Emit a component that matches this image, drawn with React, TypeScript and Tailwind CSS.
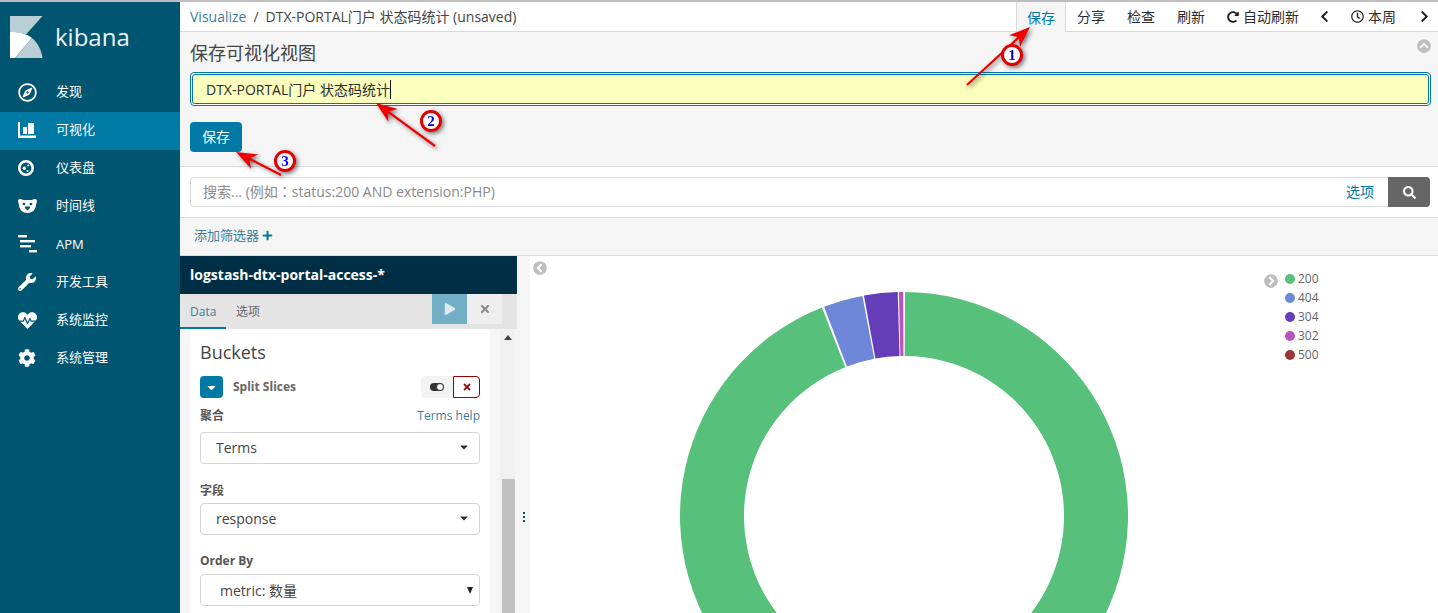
import { FaRegCompass, FaWrench, FaHeartbeat, FaCog, FaSearch, FaPlus, FaPlay, FaTimes, FaChevronLeft, FaChevronRight, FaChevronCircleUp, FaChevronCircleLeft, FaChevronCircleRight, FaRedoAlt, FaRegClock, FaCaretDown } from 'react-icons/fa'

const FONT = "font-['Open_Sans','Noto_Sans_CJK_SC',sans-serif]"

function BarsIcon() {
  return (
    <svg width="18" height="16" viewBox="0 0 18 16" fill="#fff">
      <path d="M0 0h2v13.500h16V16H0z" />
      <path d="M5 5h4v7H5zM10 1h6v11h-6z" />
    </svg>
  )
}

function DashIcon() {
  return (
    <svg width="16" height="16" viewBox="0 0 16 16">
      <circle cx="8" cy="8" r="6.700" fill="none" stroke="#fff" strokeWidth="2.600" />
      <circle cx="6.300" cy="8.300" r="1.700" fill="#fff" />
      <circle cx="10.300" cy="5.500" r="1.100" fill="#fff" />
      <circle cx="9.500" cy="11" r="1.100" fill="#fff" />
    </svg>
  )
}

function BearIcon() {
  return (
    <svg width="19" height="14" viewBox="0 0 19 14" fill="#fff">
      <path d="M0 2C0 .6 1 0 2.500 0 3.600 0 4.200.6 5 1h9c.8-.4 1.400-1 2.500-1C18 0 19 .6 19 2c0 1.200-.6 1.800-.8 3C18 10 15 14 9.500 14S1 10 .8 5C.6 3.800 0 3.200 0 2z" />
      <circle cx="6" cy="5" r="1.300" fill="#005571" />
      <circle cx="13" cy="5" r="1.300" fill="#005571" />
      <path d="M7 7.500h5v1.500l-2.500 2.500L7 9z" fill="#005571" />
    </svg>
  )
}

function ApmIcon() {
  return (
    <svg width="19" height="18" viewBox="0 0 19 18" fill="#fff">
      <rect x="0" y="0" width="9" height="2.400" />
      <rect x="2" y="5" width="15" height="2.400" />
      <rect x="2" y="10" width="11" height="2.400" />
      <rect x="11" y="15" width="8" height="2.400" />
    </svg>
  )
}

const NAV = [
  { label: '发现', icon: <FaRegCompass size={19} /> },
  { label: '可视化', icon: <BarsIcon />, active: true },
  { label: '仪表盘', icon: <DashIcon /> },
  { label: '时间线', icon: <BearIcon /> },
  { label: 'APM', icon: <ApmIcon /> },
  { label: '开发工具', icon: <FaWrench size={18} /> },
  { label: '系统监控', icon: <FaHeartbeat size={19} /> },
  { label: '系统管理', icon: <FaCog size={18} /> },
]

const LEGEND = [
  ['200', 'bg-[#57c17b]'],
  ['404', 'bg-[#6f87d8]'],
  ['304', 'bg-[#663db8]'],
  ['302', 'bg-[#bc52bc]'],
  ['500', 'bg-[#9e3533]'],
]

// donut slices, degrees clockwise from 12 o'clock
const SLICES = [
  { from: 0.25, to: 338.5, color: '#57c17b' },
  { from: 339.1, to: 349.3, color: '#6f87d8' },
  { from: 349.7, to: 358.4, color: '#663db8' },
  { from: 358.7, to: 359.8, color: '#bc52bc' },
]

function arcPath(from: number, to: number, R: number, r: number, c: number) {
  const pt = (rad: number, deg: number) => {
    const a = (deg * Math.PI) / 180
    return `${(c + rad * Math.sin(a)).toFixed(2)} ${(c - rad * Math.cos(a)).toFixed(2)}`
  }
  const large = to - from > 180 ? 1 : 0
  return `M${pt(R, from)} A${R} ${R} 0 ${large} 1 ${pt(R, to)} L${pt(r, to)} A${r} ${r} 0 ${large} 0 ${pt(r, from)} Z`
}

function Select({ value, pad = 'pl-[15px]', native }: { value: string; pad?: string; native?: boolean }) {
  return (
    <div className={`h-[32px] rounded-[4px] border border-[#d4d4d4] bg-white flex items-center justify-between ${pad} ${native ? 'pr-[6px]' : 'pr-[9px] pb-[2px]'} text-[14px] text-[#444]`}>
      <span>{value}</span>
      {native
        ? <span className="w-0 h-0 border-x-[3.500px] border-x-transparent border-t-[7px] border-t-[#222]" />
        : <FaCaretDown size={12} className="text-[#333]" />}
    </div>
  )
}

function Badge({ x, y, n }: { x: number; y: number; n: string }) {
  return (
    <g>
      <circle cx={x} cy={y} r="9.500" fill="#fff" stroke="#e00000" strokeWidth="3" />
      <text x={x} y={y + 5} textAnchor="middle" fontSize="15" fontWeight="700" fill="#0000ee" fontFamily="'Liberation Serif', serif">{n}</text>
    </g>
  )
}

function Arrow({ x1, y1, x2, y2 }: { x1: number; y1: number; x2: number; y2: number }) {
  const ang = Math.atan2(y2 - y1, x2 - x1)
  const d = (b: number, s: number) => `${x2 - b * Math.cos(ang) - s * Math.sin(ang)},${y2 - b * Math.sin(ang) + s * Math.cos(ang)}`
  return (
    <g>
      <line x1={x1} y1={y1} x2={x2 - 10 * Math.cos(ang)} y2={y2 - 10 * Math.sin(ang)} stroke="#f00000" strokeWidth="2.200" />
      <polygon points={`${x2},${y2} ${d(21, 8)} ${d(15, 0)} ${d(21, -8)}`} fill="#f00000" />
    </g>
  )
}

export default function App() {
  return (
    <div className={`relative h-[613px] w-[1438px] overflow-hidden bg-white flex flex-col ${FONT}`}>
      <div className="h-[2px] bg-[#bdbdbd] shrink-0" />
      <div className="flex flex-1 min-h-0">
        {/* left nav */}
        <aside className="w-[180px] shrink-0 bg-[#005571] text-white">
          <div className="h-[72px] flex items-start pl-[10px] pt-[14px]">
            <svg width="33" height="43" viewBox="0 0 33 43" className="shrink-0">
              <path d="M0 0h32.500L16 18.500C11 16.500 5 15.700 0 15.700z" fill="#b9ced6" />
              <path d="M0 15.700c8.500 0 16.500 2 22 6.300L5 42H0z" fill="#ffffff" />
              <path d="M22 22c5.500 4.500 9.500 12 10.500 20H5z" fill="#b9ced6" />
            </svg>
            <span className="ml-[12px] mt-[4px] text-[24px] leading-[34px] text-[#eef4f6]">kibana</span>
          </div>
          {NAV.map(item => (
            <div key={item.label} className={`h-[38px] flex items-center pb-[2px] ${item.active ? 'bg-[#0079a5]' : ''}`}>
              <div className="w-[56px] pl-[18px] flex items-center">{item.icon}</div>
              <span className={`text-[13px] ${item.label === 'APM' ? 'mt-[2px]' : ''}`}>{item.label}</span>
            </div>
          ))}
        </aside>

        <main className="flex-1 min-w-0 flex flex-col">
          {/* top bar */}
          <div className="h-[30px] shrink-0 flex items-stretch justify-between border-b border-[#d9d9d9] text-[14px] text-[#2d2d2d]">
            <div className="pl-[10px] flex items-center gap-[7px] text-[#444]">
              <span className="text-[#3c7f9b]">Visualize</span>
              <span>/</span>
              <span>DTX-PORTAL门户 状态码统计 (unsaved)</span>
            </div>
            <div className="flex items-stretch">
              <div className="w-[50px] -mb-px bg-[#f5f5f5] border-x border-[#d9d9d9] flex items-center justify-center text-[#0079a5]">保存</div>
              <div className="px-[11px] flex items-center">分享</div>
              <div className="px-[11px] flex items-center">检查</div>
              <div className="px-[11px] flex items-center">刷新</div>
              <div className="px-[11px] flex items-center gap-[4px]"><FaRedoAlt size={12} className="text-[#222]" />自动刷新</div>
              <div className="pl-[8px] pr-[12px] flex items-center"><FaChevronLeft size={13} className="text-[#222]" /></div>
              <div className="pl-[8px] pr-[11px] flex items-center gap-[4px]"><FaRegClock size={13} className="text-[#222]" />本周</div>
              <div className="pl-[11px] pr-[7px] flex items-center"><FaChevronRight size={13} className="text-[#222]" /></div>
            </div>
          </div>

          {/* save panel */}
          <div className="h-[135px] shrink-0 bg-[#f5f5f5] border-b border-[#d9d9d9] pl-[10px] pr-[7px] relative">
            <h2 className="pt-[9px] text-[18px] leading-[25px] text-[#444]">保存可视化视图</h2>
            <FaChevronCircleUp size={14} className="absolute right-[7px] top-[7px] text-[#bdbdbd]" />
            <div className="mt-[6px] h-[34px] rounded-[4px] border border-[#0079a5] bg-white p-px">
              <div className="h-full rounded-[3px] border border-[#0079a5] bg-[#faffbd] flex items-center pl-[13px] text-[14px] text-[#2d2d2d]">
                DTX-PORTAL门户 状态码统计<span className="w-px h-[19px] bg-[#111]" />
              </div>
            </div>
            <button className="mt-[16px] block w-[52px] h-[30px] pb-[2px] rounded-[4px] bg-[#0079a5] text-white text-[14px]">保存</button>
          </div>

          {/* search */}
          <div className="h-[51px] shrink-0 border-b border-[#d9d9d9] pl-[10px] pr-[8px] pt-[10px]">
            <div className="flex h-[30px]">
              <div className="flex-1 rounded-l-[4px] border border-r-0 border-[#d9d9d9] flex items-center justify-between pl-[12px] pr-[14px] pb-[2px] text-[14px] text-[#8a8a8a]">
                <span>搜索... (例如<span className="font-['Noto_Sans_CJK_TC',sans-serif]">：</span>status:200 AND extension:PHP)</span>
                <span className="text-[#0079a5]">选项</span>
              </div>
              <div className="w-[42px] rounded-r-[4px] bg-[#666] flex items-center justify-center">
                <FaSearch size={13} className="text-white" />
              </div>
            </div>
          </div>

          {/* filter bar */}
          <div className="h-[38px] shrink-0 bg-[#f5f5f5] border-b border-[#d9d9d9] pl-[14px] pb-[2px] flex items-center gap-[3px] text-[13px] text-[#3c7f9b]">
            添加筛选器<FaPlus size={11} className="text-[#0079a5]" />
          </div>

          <div className="flex-1 min-h-0 flex">
            {/* editor sidebar */}
            <div className="w-[337px] shrink-0 bg-[#f5f5f5] flex flex-col">
              <div className="h-[38px] shrink-0 bg-[#002f45] flex items-center pl-[10px] pb-[2px] text-[14px] font-bold text-white">logstash-dtx-portal-access-*</div>
              <div className="h-[35px] shrink-0 bg-[#e4e4e4] flex items-start text-[12px]">
                <div className="w-[46px] h-[35px] border-b-2 border-[#0079a5] pl-[10px] pt-[9px] text-[#3c7f9b]">Data</div>
                <div className="pl-[10px] pt-[9px] text-[#666]">选项</div>
                <div className="ml-auto mr-[15px] flex h-[30px]">
                  <div className="w-[35px] bg-[#72afc7] flex items-center justify-center"><FaPlay size={12} className="text-[#dcebf1]" /></div>
                  <div className="w-[35px] bg-[#eeeeee] flex items-center justify-center"><FaTimes size={12} className="text-[#8e8e8e]" /></div>
                </div>
              </div>
              <div className="flex-1 min-h-0 flex pl-[10px]">
                <div className="w-[300px] shrink-0 bg-white rounded-t-[4px] px-[10px] text-[#555]">
                  <h3 className="pt-[11px] text-[18px] leading-[25px] text-[#444]">Buckets</h3>
                  <div className="mt-[11px] flex items-center">
                    <div className="w-[23px] h-[22px] rounded-[4px] bg-[#0079a5] flex items-center justify-center"><FaCaretDown size={13} className="text-white" /></div>
                    <span className="ml-[10px] text-[12px] font-bold text-[#666]">Split Slices</span>
                    <div className="ml-auto flex h-[22px]">
                      <div className="w-[32px] rounded-l-[4px] bg-[#f3f3f3] flex items-center justify-center">
                        <div className="w-[14px] h-[8px] rounded-full bg-[#333] flex justify-end"><div className="w-[8px] h-[8px] rounded-full border border-[#333] bg-white" /></div>
                      </div>
                      <div className="w-[27px] rounded-r-[4px] border border-[#990000] bg-white flex items-center justify-center"><FaTimes size={10} className="text-[#990000]" /></div>
                    </div>
                  </div>
                  <div className="mt-[9px] flex items-center justify-between text-[12px] leading-[18px]">
                    <span className="font-bold text-[#555]">聚合</span>
                    <span className="text-[#3c7f9b]">Terms help</span>
                  </div>
                  <div className="mt-[7px]"><Select value="Terms" /></div>
                  <div className="mt-[18px] text-[12px] leading-[18px] font-bold text-[#555]">字段</div>
                  <div className="mt-[3px]"><Select value="response" /></div>
                  <div className="mt-[17px] text-[12px] leading-[18px] font-bold text-[#555]">Order By</div>
                  <div className="mt-[4px]"><Select value="metric: 数量" pad="pl-[19px]" native /></div>
                </div>
                <div className="ml-[10px] w-[15px] bg-[#f0f0f0] flex flex-col items-center relative">
                  <div className="mt-[6px] w-0 h-0 border-x-[4px] border-x-transparent border-b-[5px] border-b-[#444]" />
                  <div className="absolute left-[2px] right-0 top-[150px] bottom-0 bg-[#c0c0c0]" />
                </div>
              </div>
            </div>

            {/* resize handle */}
            <div className="w-[13px] shrink-0 bg-[#f5f5f5] flex flex-col items-center gap-[2px] pt-[256px]">
              <span className="w-[2px] h-[2px] bg-[#005571]" />
              <span className="w-[2px] h-[2px] bg-[#005571]" />
              <span className="w-[2px] h-[2px] bg-[#005571]" />
            </div>

            {/* chart */}
            <div className="flex-1 min-w-0 flex">
              <div className="w-[748px] shrink-0 relative flex justify-center pt-[36px]">
                <FaChevronCircleLeft size={14} className="absolute left-[3px] top-[5px] text-[#bdbdbd]" />
                <svg width="448" height="448" viewBox="0 0 448 448" className="shrink-0">
                  {SLICES.map(s => (
                    <path key={s.color} d={arcPath(s.from, s.to, 224, 160, 224)} fill={s.color} />
                  ))}
                </svg>
              </div>
              <div className="flex-1 flex items-start pt-[13px] pl-[7px]">
                <div className="flex flex-col">
                  {LEGEND.map(([label, color]) => (
                    <div key={label} className="h-[19px] flex items-center gap-[3px] text-[12px] text-[#666]">
                      <span className={`w-[10px] h-[10px] rounded-full ${color}`} />
                      {label}
                    </div>
                  ))}
                </div>
              </div>
            </div>
          </div>
        </main>
      </div>

      {/* legend toggle, lies beside the legend */}
      <FaChevronCircleRight size={14} className="absolute left-[1264px] top-[274px] text-[#bdbdbd]" />

      {/* red annotations */}
      <svg width="1438" height="613" className="absolute inset-0 pointer-events-none drop-shadow-[2px_2px_2px_rgba(0,0,0,0.5)]">
        <Arrow x1={967} y1={85} x2={1030} y2={27} />
        <Arrow x1={435} y1={146} x2={376} y2={103} />
        <Arrow x1={281} y1={175} x2={236} y2={152} />
        <Badge x={1012} y={55} n="1" />
        <Badge x={431} y={121} n="2" />
        <Badge x={285} y={161} n="3" />
      </svg>
    </div>
  )
}
